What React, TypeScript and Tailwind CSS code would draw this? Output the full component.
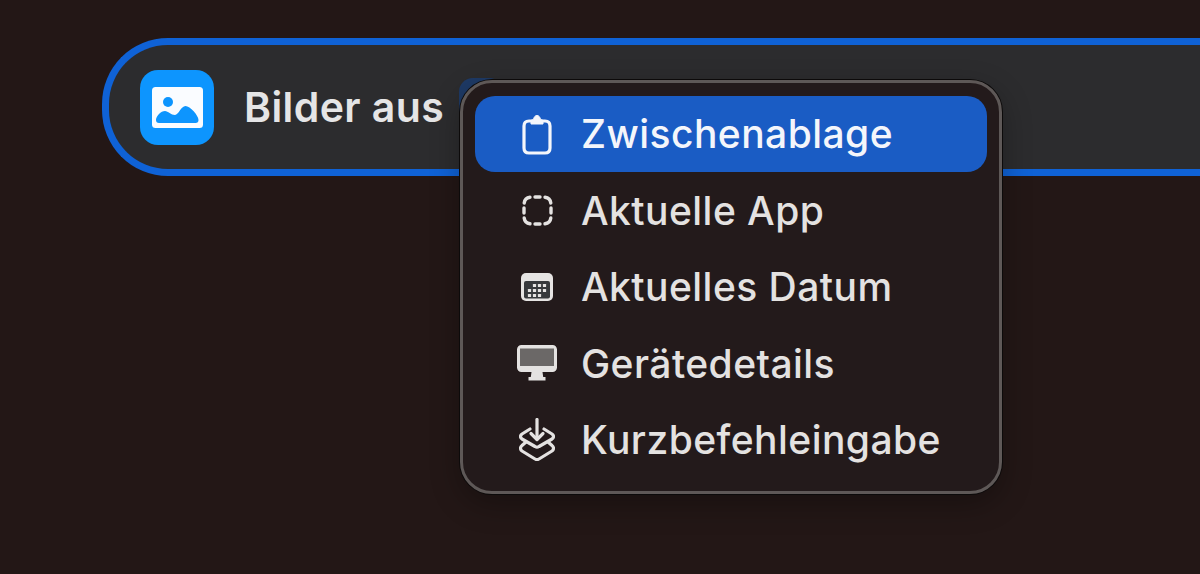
import type { ReactNode } from 'react'

function ClipboardIcon() {
  return (
    <svg width="30" height="41" viewBox="0 0 30 41" fill="none" stroke="currentColor" strokeWidth="3.2">
      <path d="M9 7H7C3.8 7 2 8.8 2 12V34C2 37.2 3.8 39 7 39H23C26.2 39 28 37.2 28 34V12C28 8.8 26.2 7 23 7H21" strokeLinecap="round" />
      <path d="M9 10V7C9 6.2 9.5 5.6 10.3 5.6H11.5C11.8 3.2 13.1 1.5 15 1.5C16.9 1.5 18.2 3.2 18.5 5.6H19.7C20.5 5.6 21 6.2 21 7V10H9Z" fill="currentColor" strokeWidth="1" />
    </svg>
  )
}

function DashedSquareIcon() {
  return (
    <svg width="31" height="31" viewBox="0 0 31 31" fill="none" stroke="currentColor" strokeWidth="3.4" strokeLinecap="round">
      <path d="M2.2 8C2.6 4.8 4.8 2.6 8 2.2" />
      <path d="M13 2H18" />
      <path d="M23 2.2C26.2 2.6 28.4 4.8 28.8 8" />
      <path d="M29 13V18" />
      <path d="M28.8 23C28.4 26.2 26.2 28.4 23 28.8" />
      <path d="M13 29H18" />
      <path d="M8 28.8C4.8 28.4 2.6 26.2 2.2 23" />
      <path d="M2 13V18" />
    </svg>
  )
}

function CalendarIcon() {
  const dots = [
    [13.5, 12.5], [18.5, 12.5], [23.5, 12.5],
    [8.5, 17.5], [13.5, 17.5], [18.5, 17.5], [23.5, 17.5],
    [8.5, 22.5], [13.5, 22.5], [18.5, 22.5],
  ]
  return (
    <svg width="32" height="28" viewBox="0 0 32 28">
      <rect width="32" height="28" rx="5" fill="#e6e4e3" />
      <rect x="3" y="8" width="26" height="17.5" rx="2" fill="#37393c" />
      {dots.map(([x, y]) => (
        <rect key={`${x}-${y}`} x={x - 1.6} y={y - 1.6} width="3.2" height="3.2" rx="0.5" fill="#e6e4e3" />
      ))}
    </svg>
  )
}

function MonitorIcon() {
  return (
    <svg width="40" height="36" viewBox="0 0 40 36">
      <path d="M4.5 0H35.5C38 0 40 2 40 4.5V22.5C40 25 38 27 35.5 27H25.5L26.2 32H28.5V35.5H11.5V32H13.8L14.5 27H4.5C2 27 0 25 0 22.5V4.5C0 2 2 0 4.5 0Z" fill="#e4e2e1" />
      <rect x="3" y="3.5" width="34" height="17.5" fill="#6b6867" />
    </svg>
  )
}

function StackDownIcon() {
  return (
    <svg width="36" height="43" viewBox="0 0 36 43" fill="none" stroke="currentColor" strokeWidth="3.2" strokeLinecap="round" strokeLinejoin="round">
      <path d="M18 1.5V21" />
      <path d="M12 15.5L18 21.5L24 15.5" />
      <path d="M11 11L3 16C1 17.5 1 19.5 3 21L16 28.5C17.3 29.3 18.7 29.3 20 28.5L33 21C35 19.5 35 17.5 33 16L25 11" />
      <path d="M7 24L3 27.5C1 29 1 31.5 3 33L16 41C17.3 41.8 18.7 41.8 20 41L33 33C35 31.5 35 29 33 27.5L29 24" />
    </svg>
  )
}

function PhotoAppIcon() {
  return (
    <div className="flex h-[75px] w-[74px] shrink-0 items-center justify-center rounded-[18px] bg-[#0d95fe]">
      <svg width="51" height="41" viewBox="0 0 51 41">
        <rect width="51" height="41" rx="3.5" fill="#fafcff" />
        <circle cx="16" cy="15" r="5" fill="#0d95fe" />
        <path d="M4 33C4 29 9 24 13 24C16 24 19 28 23 28C26.5 28 29 19 33.5 19C38 19 46.5 28.5 46.5 33C46.5 35 45.5 36 43.5 36H7C5 36 4 35 4 33Z" fill="#0d95fe" />
      </svg>
    </div>
  )
}

const items: { label: string; icon: ReactNode; active?: boolean }[] = [
  { label: 'Zwischenablage', icon: <ClipboardIcon />, active: true },
  { label: 'Aktuelle App', icon: <DashedSquareIcon /> },
  { label: 'Aktuelles Datum', icon: <CalendarIcon /> },
  { label: 'Gerätedetails', icon: <MonitorIcon /> },
  { label: 'Kurzbefehleingabe', icon: <StackDownIcon /> },
]

export default function App() {
  return (
    <div className="relative h-[574px] w-[1200px] overflow-hidden bg-[#231716] pt-[38px] pl-[102px] font-['Inter','Liberation_Sans',sans-serif]">
      <div className="flex h-[138px] w-[1200px] items-center rounded-l-[66px] border-[7px] border-r-0 border-[#0f62d6] bg-[#2c2c2e] pl-[31px]">
        <PhotoAppIcon />
        <span className="mt-[2px] ml-[30px] text-[41px] font-semibold tracking-[0.4px] text-[#e5e5e6]">Bilder aus</span>
      </div>

      {/* token peeking out behind the menu */}
      <div className="absolute top-[78px] left-[459px] h-[60px] w-[44px] rounded-[14px] bg-[#1e3a66]" />

      <div className="absolute top-[80px] left-[460px] w-[542px] rounded-[32px] border-[3px] border-[#5e5857] bg-[#231a1b] px-[12px] py-[13px] shadow-[0_0_0_1px_#0c0a0a,0_10px_30px_rgba(0,0,0,0.3)]">
        {items.map((item) => (
          <div
            key={item.label}
            className={`flex h-[76.4px] items-center rounded-[20px] pl-[37px] text-[39px] font-medium tracking-[0.45px] ${
              item.active ? 'bg-[#1a5cc4] text-[#f4f6fb]' : 'text-[#e4e2e1]'
            }`}
          >
            <div className="flex w-[50px] shrink-0 justify-center">{item.icon}</div>
            <span className="mt-[1px] ml-[19px] whitespace-nowrap">{item.label}</span>
          </div>
        ))}
      </div>
    </div>
  )
}
